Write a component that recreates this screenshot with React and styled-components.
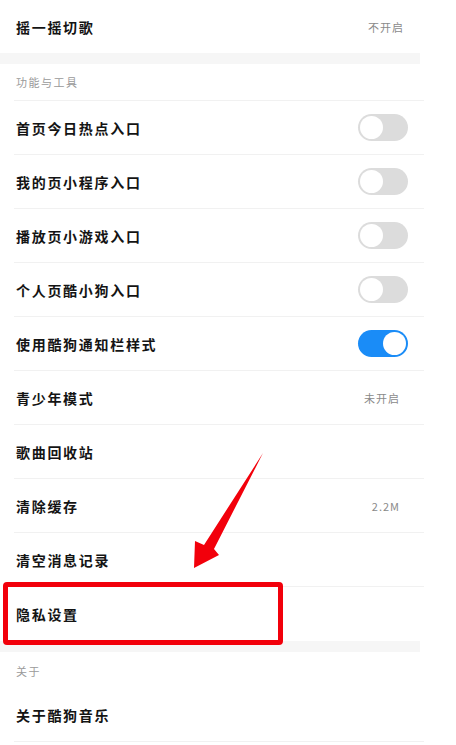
import styled, { createGlobalStyle } from "styled-components";

const GlobalStyle = createGlobalStyle`
    body {
        margin: 0;
        background: #fff;
        font-family: "Noto Sans CJK SC", "Noto Sans", sans-serif;
    }
`;

const Page = styled.div`
    position: relative;
    width: 456px;
    height: 745px;
    overflow: hidden;
    background: #fff;
`;

const List = styled.div`
    width: 424px;
    display: flex;
    flex-direction: column;
`;

const Row = styled.div`
    height: ${(p) => p.$h || 54}px;
    box-sizing: border-box;
    display: flex;
    align-items: center;
    justify-content: space-between;
    padding: 0 16px;
    margin-left: 14px;
    padding-left: 2px;
    border-bottom: ${(p) => (p.$noLine ? "none" : "1px solid #f1f1f1")};
`;

const Title = styled.span`
    font-size: 14px;
    font-weight: 700;
    letter-spacing: 1.7px;
    color: #141414;
`;

const Value = styled.span`
    font-size: 11px;
    letter-spacing: 1px;
    color: #8a8a8a;
    padding-right: ${(p) => p.$pr || 4}px;
`;

const Band = styled.div`
    width: 420px;
    height: 11px;
    background: #f6f6f6;
`;

const SectionHeader = styled.div`
    height: 37px;
    box-sizing: border-box;
    display: flex;
    align-items: center;
    margin-left: 14px;
    padding-left: 2px;
    font-size: 11px;
    letter-spacing: 1.5px;
    color: #9a9a9a;
    border-bottom: ${(p) => (p.$line ? "1px solid #f1f1f1" : "none")};
`;

const Toggle = styled.div`
    width: 50px;
    height: 27px;
    border-radius: 14px;
    background: ${(p) => (p.$on ? "#1a8cf7" : "#dcdcdc")};
    display: flex;
    align-items: center;
    justify-content: ${(p) => (p.$on ? "flex-end" : "flex-start")};
    padding: 0 2px;
    box-sizing: border-box;
`;

const Knob = styled.div`
    width: 23px;
    height: 23px;
    border-radius: 50%;
    background: #fff;
`;

const Highlight = styled.div`
    position: absolute;
    left: 3px;
    top: 582px;
    width: 280px;
    height: 63px;
    box-sizing: border-box;
    border: 5.5px solid #f2000b;
    border-radius: 4px;
`;

const Arrow = styled.svg`
    position: absolute;
    left: 0;
    top: 0;
    pointer-events: none;
`;

const toolRows = [
    { title: "首页今日热点入口", toggle: false },
    { title: "我的页小程序入口", toggle: false },
    { title: "播放页小游戏入口", toggle: false },
    { title: "个人页酷小狗入口", toggle: false },
    { title: "使用酷狗通知栏样式", toggle: true },
    { title: "青少年模式", value: "未开启", pr: 8 },
    { title: "歌曲回收站" },
    { title: "清除缓存", value: "2.2M", pr: 8 },
    { title: "清空消息记录" },
    { title: "隐私设置", noLine: true },
];

export default function App() {
    return (
        <Page>
            <GlobalStyle />
            <List>
                <Row $h={53} $noLine>
                    <Title>摇一摇切歌</Title>
                    <Value>不开启</Value>
                </Row>
                <Band />
                <SectionHeader $line>功能与工具</SectionHeader>
                {toolRows.map((r) => (
                    <Row key={r.title} $noLine={r.noLine}>
                        <Title>{r.title}</Title>
                        {r.toggle !== undefined && (
                            <Toggle $on={r.toggle}>
                                <Knob />
                            </Toggle>
                        )}
                        {r.value && <Value $pr={r.pr}>{r.value}</Value>}
                    </Row>
                ))}
                <Band />
                <SectionHeader>关于</SectionHeader>
                <Row $h={53}>
                    <Title>关于酷狗音乐</Title>
                </Row>
            </List>
            <Highlight />
            <Arrow width="456" height="745" viewBox="0 0 456 745">
                <polygon
                    points="263,453 214,549 219,555 194,568 195,541 204,545"
                    fill="#f2000b"
                />
            </Arrow>
        </Page>
    );
}
